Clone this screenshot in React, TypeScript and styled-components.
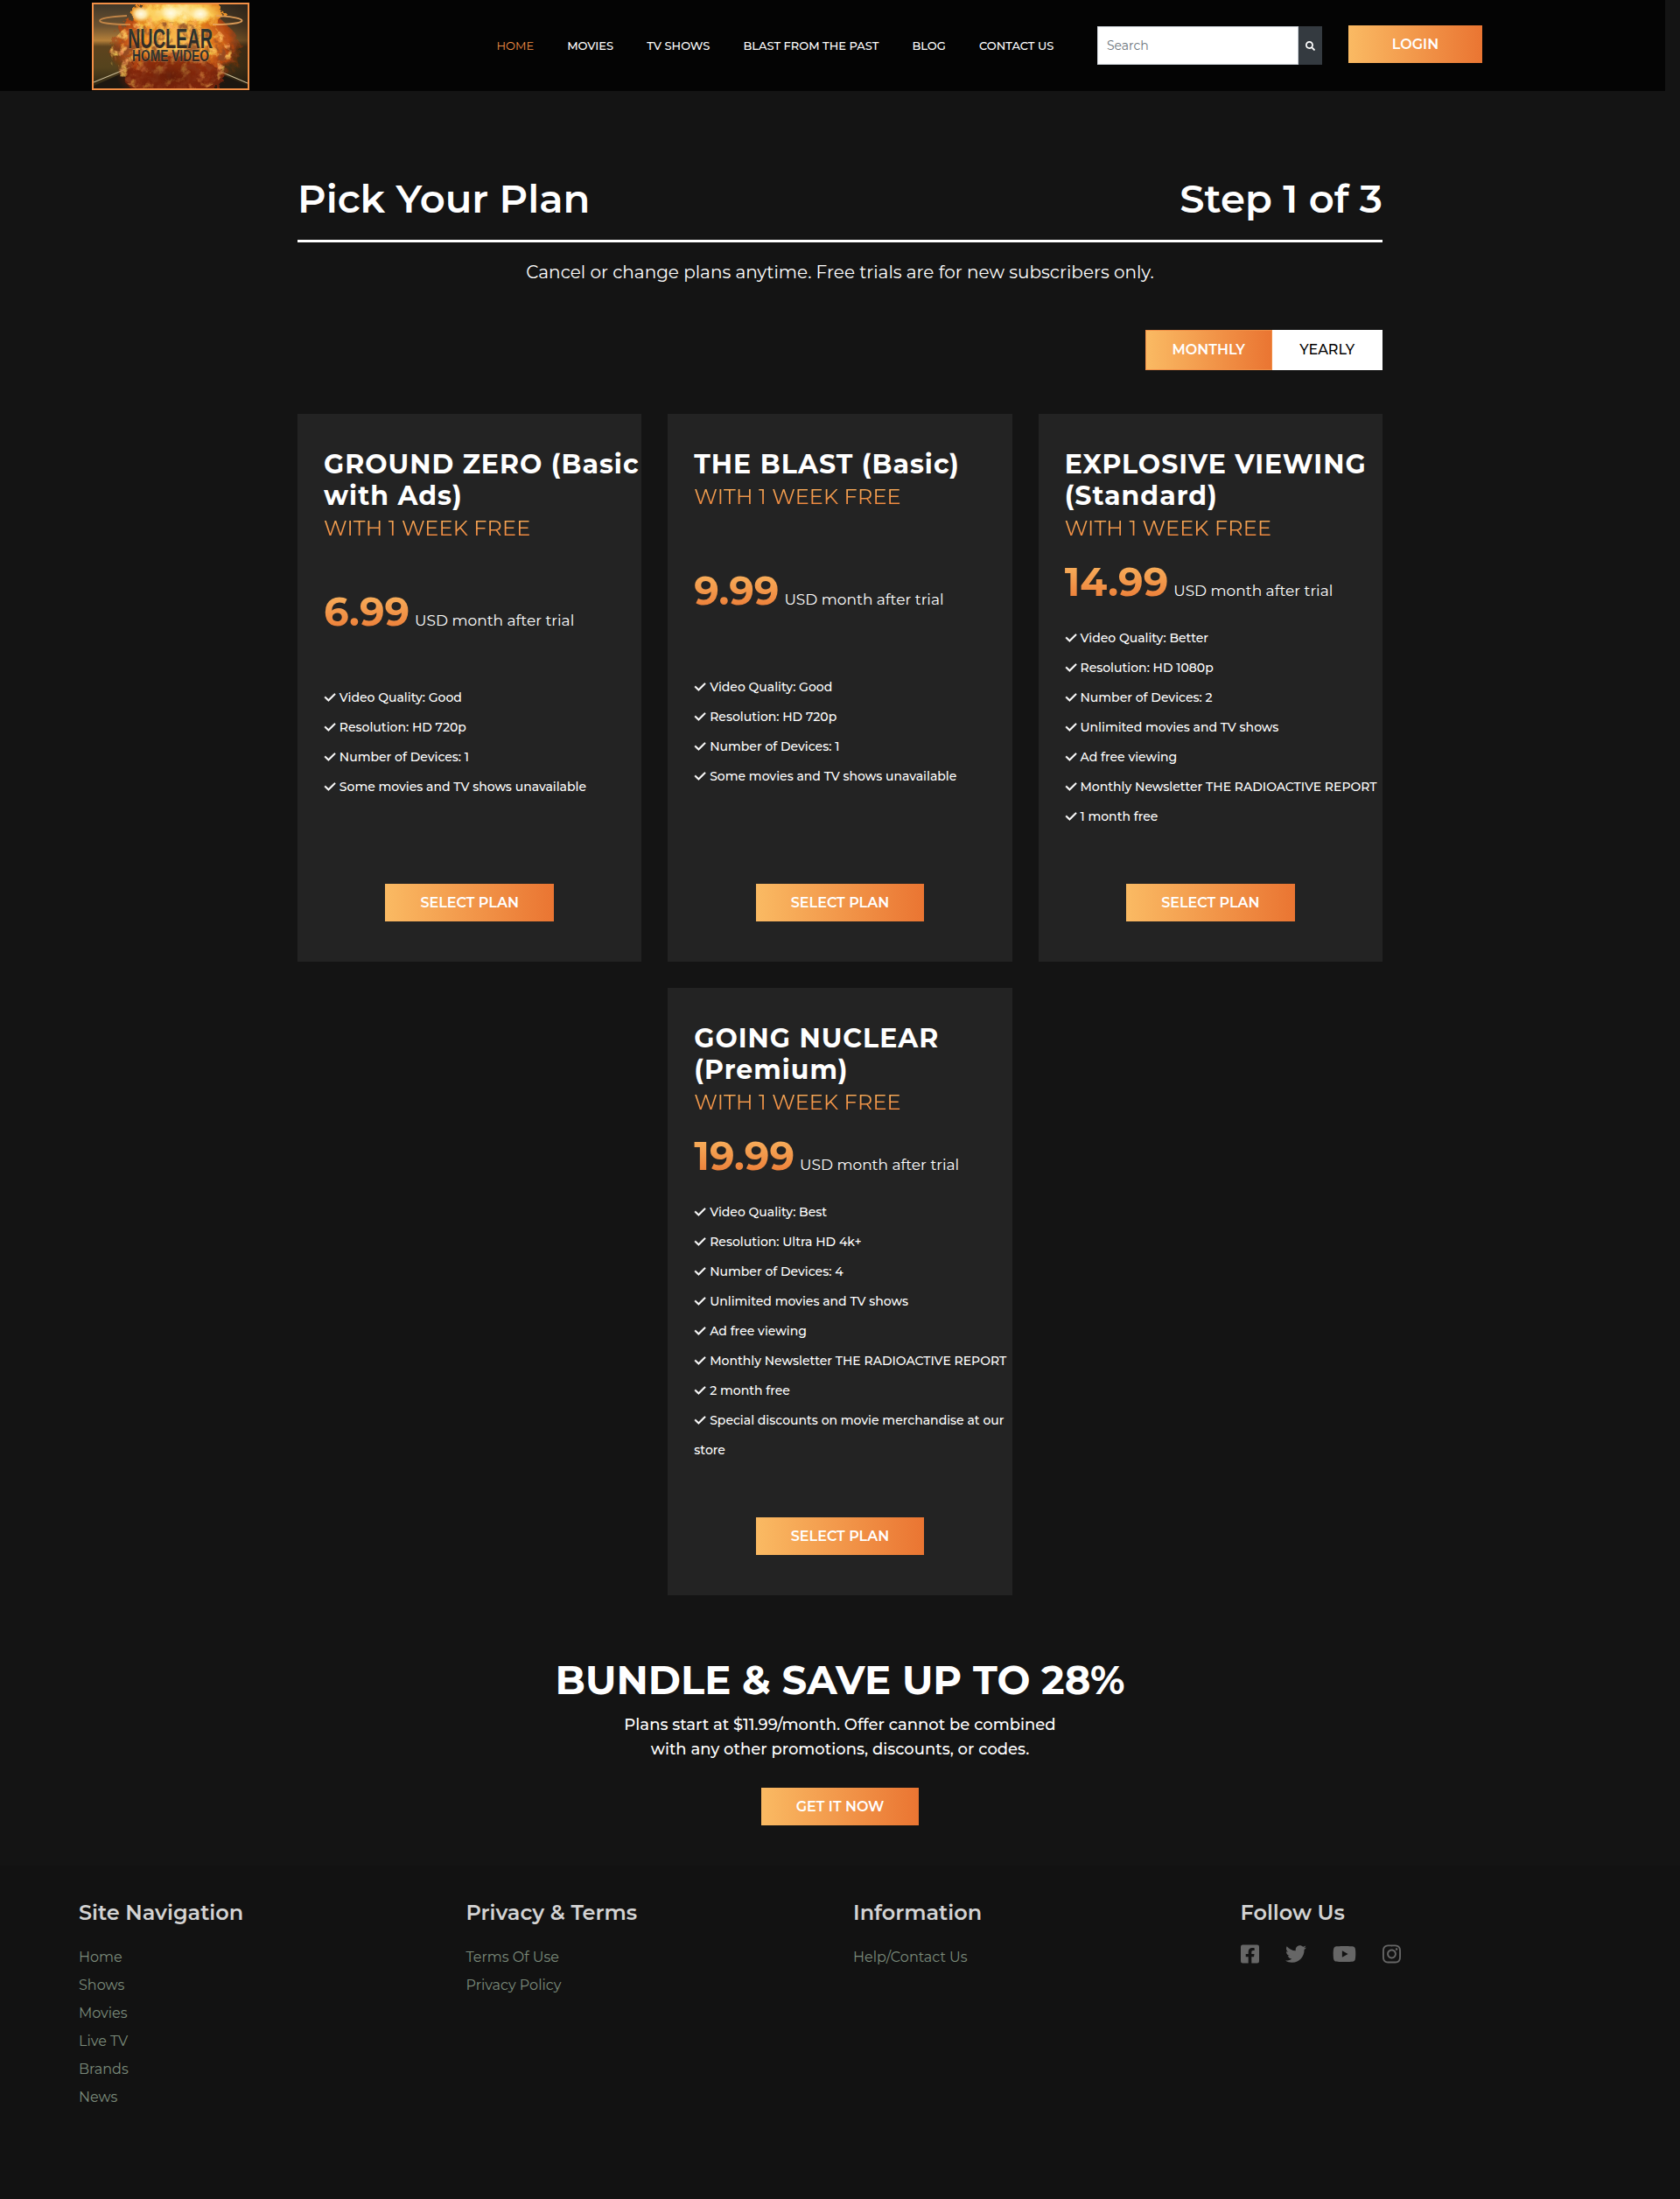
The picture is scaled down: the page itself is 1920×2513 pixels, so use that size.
import React from 'react';
import styled, { createGlobalStyle } from 'styled-components';
import { FaFacebookSquare, FaInstagram, FaSearch, FaTwitter, FaYoutube } from 'react-icons/fa';
import { FaCheck } from 'react-icons/fa6';

const flame = 'linear-gradient(90deg, #faba63 0%, #ea7532 100%)';
const flameDown = 'linear-gradient(180deg, #faba63 0%, #ea7532 100%)';

const GlobalStyle = createGlobalStyle`
  *, *::before, *::after { box-sizing: border-box; }
  body {
    margin: 0;
    background: #141414;
    color: #fff;
    font-family: Montserrat, Inter, 'Open Sans', sans-serif;
  }
  h1, h2, h3, p, ul { margin: 0; padding: 0; }
  ul { list-style: none; }
  a { color: inherit; text-decoration: none; }
`;

const Page = styled.div`
  display: flex;
  flex-direction: column;
  height: 2513px;
  overflow: hidden;
`;

/* ---------- header ---------- */

const Header = styled.header`
  display: flex;
  align-items: center;
  width: calc(100% - 17px);
  height: 104px;
  padding-left: 105px;
  background: #040404;
`;

const LogoLink = styled.a`
  display: block;
  width: 180px;
  height: 100px;
  margin-top: 2px;
  border: 2px solid #f18f46;
  svg { display: block; }
`;

const Nav = styled.nav`
  display: flex;
  gap: 38.1px;
  width: 686.5px;
  margin-left: 282.5px;
  font-size: 13px;
  white-space: nowrap;
`;

const NavLink = styled.a<{ $active?: boolean }>`
  color: ${(p) => (p.$active ? '#f18f46' : '#fff')};
  font-weight: ${(p) => (p.$active ? 400 : 500)};
`;

const SearchForm = styled.form`
  display: flex;
  height: 44px;
`;

const SearchInput = styled.input`
  width: 230px;
  padding: 0 10px;
  border: 1px solid #ced4da;
  border-radius: 0;
  outline: 0;
  background: #fff;
  font: 400 14px Montserrat, Inter, sans-serif;
  &::placeholder { color: #6c757d; opacity: 1; }
`;

const SearchButton = styled.button`
  display: flex;
  align-items: center;
  justify-content: center;
  width: 27px;
  padding: 0;
  border: 0;
  background: #343a40;
  color: #fff;
  font-size: 11px;
`;

const Button = styled.a<{ $width: number }>`
  display: flex;
  flex: none;
  align-items: center;
  justify-content: center;
  width: ${(p) => p.$width}px;
  height: 43px;
  background: ${flame};
  color: #fff;
  font-size: 16px;
  font-weight: 600;
  white-space: nowrap;
`;

const LoginButton = styled(Button)`
  align-self: flex-start;
  margin: 29px 0 0 30px;
`;

/* ---------- plan picker ---------- */

const Main = styled.main`
  display: flex;
  flex: none;
  flex-direction: column;
  width: 1240px;
  height: 2028px;
  margin: 0 auto;
  padding-top: 96px;
`;

const TitleRow = styled.div`
  display: flex;
  justify-content: space-between;
  padding-bottom: 20px;
  border-bottom: 3px solid #fff;
`;

const Heading = styled.h1`
  font-size: 45px;
  font-weight: 600;
  line-height: 54px;
`;

const Note = styled.p`
  margin-top: 19px;
  font-size: 20px;
  line-height: 30px;
  text-align: center;
`;

const Toggle = styled.div`
  display: flex;
  flex: none;
  align-self: flex-end;
  height: 46px;
  margin-top: 51px;
`;

const ToggleOption = styled.button<{ $active?: boolean; $width: number }>`
  width: ${(p) => p.$width}px;
  padding: 0 0 1px;
  border: 1px solid ${(p) => (p.$active ? '#f18f46' : '#fff')};
  background: ${(p) => (p.$active ? flame : '#fff')};
  color: ${(p) => (p.$active ? '#fff' : '#000')};
  font-family: inherit;
  font-size: 16px;
  font-weight: ${(p) => (p.$active ? 600 : 500)};
`;

const Plans = styled.section`
  display: flex;
  flex-wrap: wrap;
  justify-content: center;
  gap: 30px;
  margin-top: 50px;
`;

const Card = styled.article`
  display: flex;
  flex-direction: column;
  justify-content: space-between;
  width: 393.33px;
  padding: 40px 0 46px;
  background: #232323;
`;

const CardHead = styled.div`
  padding-left: 30px;
`;

const PlanName = styled.h2`
  font-size: 30px;
  font-weight: 700;
  letter-spacing: 1px;
  line-height: 36px;
`;

const TrialOffer = styled.p`
  background: ${flameDown};
  background-clip: text;
  color: transparent;
  font-size: 24px;
  letter-spacing: 0.12px;
  line-height: 38px;
`;

const PriceRow = styled.div`
  height: 54px;
  margin: 15px 0 1px;
  padding-left: 30px;
  font-size: 17px;
  line-height: 54px;
  white-space: nowrap;
`;

const Amount = styled.span`
  margin-right: 1.4px;
  background: ${flameDown};
  background-clip: text;
  color: transparent;
  font-size: 45px;
  font-weight: 700;
`;

const Features = styled.ul`
  margin-top: 19px;
  padding-left: 30px;
  font-size: 14px;
  font-weight: 500;
  line-height: 34px;
`;

const Tick = styled(FaCheck)`
  width: 12.25px;
  height: 14px;
  margin: 0 0.9px;
  overflow: visible;
  vertical-align: -2px;
  path { stroke: currentColor; stroke-width: 22; }
`;

const SelectButton = styled(Button)`
  align-self: center;
  margin-top: 60px;
`;

/* ---------- bundle ---------- */

const Bundle = styled.section`
  display: flex;
  flex-direction: column;
  align-items: center;
  margin-top: 70px;
  text-align: center;
`;

const BundleTitle = styled.h2`
  font-size: 45px;
  font-weight: 700;
  line-height: 54px;
  white-space: nowrap;
`;

const BundleText = styled.p`
  margin: 10px 0 30px;
  font-size: 18px;
  font-weight: 500;
  line-height: 28px;
`;

/* ---------- footer ---------- */

const Footer = styled.footer`
  display: grid;
  flex: 1;
  grid-template-columns: repeat(4, 442.5px);
  padding: 39px 0 0 90px;
  background: #121212;
`;

const FooterTitle = styled.h3`
  margin-bottom: 20px;
  color: #d3d3d3;
  font-size: 24px;
  font-weight: 600;
  line-height: 30px;
`;

const FooterItem = styled.li`
  color: #7b8b7b;
  font-size: 16px;
  line-height: 32px;
`;

const Social = styled.div`
  display: flex;
  gap: 30px;
  color: #666;
`;

const SocialLink = styled.a<{ $width: number }>`
  svg {
    display: block;
    width: ${(p) => p.$width}px;
    height: 24px;
  }
`;

/* ---------- data ---------- */

const nav = ['HOME', 'MOVIES', 'TV SHOWS', 'BLAST FROM THE PAST', 'BLOG', 'CONTACT US'];

interface Plan {
  name: string;
  price: string;
  features: string[];
}

const plans: Plan[] = [
  {
    name: 'GROUND ZERO (Basic with Ads)',
    price: '6.99',
    features: [
      'Video Quality: Good',
      'Resolution: HD 720p',
      'Number of Devices: 1',
      'Some movies and TV shows unavailable',
    ],
  },
  {
    name: 'THE BLAST (Basic)',
    price: '9.99',
    features: [
      'Video Quality: Good',
      'Resolution: HD 720p',
      'Number of Devices: 1',
      'Some movies and TV shows unavailable',
    ],
  },
  {
    name: 'EXPLOSIVE VIEWING (Standard)',
    price: '14.99',
    features: [
      'Video Quality: Better',
      'Resolution: HD 1080p',
      'Number of Devices: 2',
      'Unlimited movies and TV shows',
      'Ad free viewing',
      'Monthly Newsletter THE RADIOACTIVE REPORT',
      '1 month free',
    ],
  },
  {
    name: 'GOING NUCLEAR (Premium)',
    price: '19.99',
    features: [
      'Video Quality: Best',
      'Resolution: Ultra HD 4k+',
      'Number of Devices: 4',
      'Unlimited movies and TV shows',
      'Ad free viewing',
      'Monthly Newsletter THE RADIOACTIVE REPORT',
      '2 month free',
      'Special discounts on movie merchandise at our store',
    ],
  },
];

const footerColumns = [
  { title: 'Site Navigation', links: ['Home', 'Shows', 'Movies', 'Live TV', 'Brands', 'News'] },
  { title: 'Privacy & Terms', links: ['Terms Of Use', 'Privacy Policy'] },
  { title: 'Information', links: ['Help/Contact Us'] },
];

/* Mushroom cloud over a road, with the studio name across it. */
const Logo = () => (
  <svg width="176" height="96" viewBox="0 0 176 96">
    <defs>
      <linearGradient id="sky" x1="0" y1="0" x2="0" y2="1">
        <stop offset="0" stopColor="#40382a" />
        <stop offset="0.26" stopColor="#6d5230" />
        <stop offset="0.43" stopColor="#b5803a" />
        <stop offset="0.5" stopColor="#5d431e" />
        <stop offset="0.75" stopColor="#55431d" />
        <stop offset="1" stopColor="#2a2414" />
      </linearGradient>
      <linearGradient id="shade" x1="0" y1="0" x2="1" y2="0">
        <stop offset="0.6" stopColor="#1c130c" stopOpacity="0" />
        <stop offset="1" stopColor="#1c130c" stopOpacity="0.55" />
      </linearGradient>
      <radialGradient id="glow" cx="0.5" cy="0.4" r="0.55">
        <stop offset="0" stopColor="#ffd873" />
        <stop offset="0.45" stopColor="#f08a22" />
        <stop offset="0.75" stopColor="#c04a12" stopOpacity="0.9" />
        <stop offset="1" stopColor="#80290a" stopOpacity="0" />
      </radialGradient>
      <radialGradient id="cap" cx="0.5" cy="0.45" r="0.55">
        <stop offset="0" stopColor="#fff0b4" />
        <stop offset="0.6" stopColor="#fbcb55" />
        <stop offset="1" stopColor="#df7a18" />
      </radialGradient>
      <radialGradient id="spark" cx="0.5" cy="0.5" r="0.5">
        <stop offset="0" stopColor="#fffbe6" />
        <stop offset="0.5" stopColor="#fff6cc" stopOpacity="0.8" />
        <stop offset="1" stopColor="#fff0a8" stopOpacity="0" />
      </radialGradient>
      <radialGradient id="coals" cx="0.5" cy="0.5" r="0.5">
        <stop offset="0" stopColor="#5a1706" stopOpacity="0.75" />
        <stop offset="0.7" stopColor="#8f2408" stopOpacity="0.5" />
        <stop offset="1" stopColor="#8f2408" stopOpacity="0" />
      </radialGradient>
      <linearGradient id="letters" x1="0" y1="0" x2="0" y2="1">
        <stop offset="0" stopColor="#453c2c" />
        <stop offset="0.45" stopColor="#26302f" />
        <stop offset="1" stopColor="#412619" />
      </linearGradient>
      <filter id="ragged" x="-10%" y="-10%" width="120%" height="120%">
        <feTurbulence type="fractalNoise" baseFrequency="0.12" numOctaves="4" seed="4" result="n" />
        <feDisplacementMap in="SourceGraphic" in2="n" scale="16" />
      </filter>
      <filter id="embers" x="0" y="0" width="100%" height="100%">
        <feTurbulence type="fractalNoise" baseFrequency="0.1" numOctaves="5" seed="9" />
        <feColorMatrix values="0 0 0 0 1  0 0.9 0 0 0.15  0 0 0 0 0.12  4 0 0 0 -2.1" result="e" />
        <feComposite in="e" in2="SourceGraphic" operator="in" />
      </filter>
      <filter id="soot" x="0" y="0" width="100%" height="100%">
        <feTurbulence type="fractalNoise" baseFrequency="0.09" numOctaves="5" seed="21" />
        <feColorMatrix values="0 0 0 0 0.27  0 0 0 0 0.07  0 0 0 0 0.02  0 5 0 0 -2.3" result="s" />
        <feComposite in="s" in2="SourceGraphic" operator="in" />
      </filter>
    </defs>
    <rect width="176" height="96" fill="url(#sky)" />
    <rect width="176" height="96" fill="url(#shade)" />
    <path d="M70 62 L-6 96 L182 96 L106 62 Z" fill="#1c1710" />
    <path d="M66 62 L0 89" stroke="#cfc09a" strokeWidth="1.1" />
    <path d="M110 62 L176 90" stroke="#cfc09a" strokeWidth="1.1" />
    <g filter="url(#ragged)">
      <ellipse cx="94" cy="54" rx="74" ry="50" fill="url(#glow)" />
      <ellipse cx="92" cy="84" rx="56" ry="24" fill="#7a280b" opacity="0.8" />
      <path d="M46 18 C38 2 50 -6 66 -6 L128 -6 C146 -6 152 8 144 20 C138 30 52 30 46 18 Z" fill="url(#cap)" />
      <path d="M70 24 H120 L126 54 H64 Z" fill="#f5b043" opacity="0.8" />
    </g>
    <ellipse cx="88" cy="62" rx="64" ry="42" filter="url(#soot)" opacity="0.8" />
    <ellipse cx="88" cy="58" rx="70" ry="46" filter="url(#embers)" opacity="0.85" />
    <ellipse cx="88" cy="82" rx="62" ry="32" fill="url(#coals)" />
    <ellipse cx="54" cy="11" rx="11" ry="9" fill="url(#spark)" />
    <ellipse cx="88" cy="10" rx="11" ry="9" fill="url(#spark)" />
    <ellipse cx="122" cy="11" rx="12" ry="9" fill="url(#spark)" />
    <path d="M38 13 C-4 15 -4 23 42 23" fill="none" stroke="#d9934d" strokeWidth="1.8" opacity="0.8" />
    <path d="M140 13 C180 15 180 23 136 23" fill="none" stroke="#e9a45c" strokeWidth="1.8" opacity="0.9" />
    <g fontFamily="'Liberation Sans', Arial, sans-serif" fontWeight="700" fill="url(#letters)" stroke="#f3c77c" strokeOpacity="0.4" strokeWidth="0.8" paintOrder="stroke">
      <text x="39" y="50" fontSize="32" textLength="97" lengthAdjust="spacingAndGlyphs">NUCLEAR</text>
      <text x="44" y="65" fontSize="18" textLength="88" lengthAdjust="spacingAndGlyphs">HOME VIDEO</text>
    </g>
  </svg>
);

const PlanCard = ({ plan }: { plan: Plan }) => (
  <Card>
    <CardHead>
      <PlanName>{plan.name}</PlanName>
      <TrialOffer>WITH 1 WEEK FREE</TrialOffer>
    </CardHead>
    <PriceRow>
      <Amount>{plan.price}</Amount> USD month after trial
    </PriceRow>
    <Features>
      {plan.features.map((feature) => (
        <li key={feature}><Tick /> {feature}</li>
      ))}
    </Features>
    <SelectButton $width={192.4} href="#">SELECT PLAN</SelectButton>
  </Card>
);

export default function App() {
  return (
    <Page>
      <GlobalStyle />
      <Header>
        <LogoLink href="#"><Logo /></LogoLink>
        <Nav>
          {nav.map((item, i) => (
            <NavLink key={item} href="#" $active={i === 0}>{item}</NavLink>
          ))}
        </Nav>
        <SearchForm>
          <SearchInput placeholder="Search" />
          <SearchButton type="button"><FaSearch /></SearchButton>
        </SearchForm>
        <LoginButton $width={153} href="#">LOGIN</LoginButton>
      </Header>
      <Main>
        <TitleRow>
          <Heading>Pick Your Plan</Heading>
          <Heading>Step 1 of 3</Heading>
        </TitleRow>
        <Note>Cancel or change plans anytime. Free trials are for new subscribers only.</Note>
        <Toggle>
          <ToggleOption $active $width={144.5}>MONTHLY</ToggleOption>
          <ToggleOption $width={126.5}>YEARLY</ToggleOption>
        </Toggle>
        <Plans>
          {plans.map((plan) => <PlanCard key={plan.price} plan={plan} />)}
        </Plans>
        <Bundle>
          <BundleTitle>BUNDLE &amp; SAVE UP TO 28%</BundleTitle>
          <BundleText>
            Plans start at $11.99/month. Offer cannot be combined
            <br />
            with any other promotions, discounts, or codes.
          </BundleText>
          <Button $width={180} href="#">GET IT NOW</Button>
        </Bundle>
      </Main>
      <Footer>
        {footerColumns.map((column) => (
          <div key={column.title}>
            <FooterTitle>{column.title}</FooterTitle>
            <ul>
              {column.links.map((link) => (
                <FooterItem key={link}><a href="#">{link}</a></FooterItem>
              ))}
            </ul>
          </div>
        ))}
        <div>
          <FooterTitle>Follow Us</FooterTitle>
          <Social>
            <SocialLink href="#" $width={21}><FaFacebookSquare /></SocialLink>
            <SocialLink href="#" $width={24}><FaTwitter /></SocialLink>
            <SocialLink href="#" $width={27}><FaYoutube /></SocialLink>
            <SocialLink href="#" $width={21}><FaInstagram /></SocialLink>
          </Social>
        </div>
      </Footer>
    </Page>
  );
}
